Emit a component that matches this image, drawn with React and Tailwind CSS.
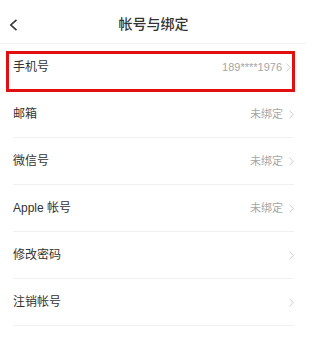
import React from "react";

const rows = [
  { label: "手机号", value: "189****1976", marked: true },
  { label: "邮箱", value: "未绑定" },
  { label: "微信号", value: "未绑定" },
  { label: "Apple 帐号", value: "未绑定" },
  { label: "修改密码", value: "" },
  { label: "注销帐号", value: "" },
];

function Chevron({ className }) {
  return (
    <svg width="5" height="9" viewBox="0 0 5 9" className={className}>
      <path d="M0.6 0.6 L4.2 4.5 L0.6 8.4" fill="none" stroke="#c8c8c8" strokeWidth="0.9" />
    </svg>
  );
}

function Row({ label, value, marked }) {
  return (
    <div className="relative h-[47px]">
      <div className="mx-[13px] flex h-full items-center justify-between border-b border-[#f1f1f1]">
        <span className="text-[12px] text-[#333333]">{label}</span>
        <div className={marked ? "mr-[3px] flex items-center" : "flex items-center"}>
          <span className="text-[11px] text-[#a6a6a6]">{value}</span>
          <Chevron className={marked ? "ml-[4px]" : "ml-[6px]"} />
        </div>
      </div>
      {marked && (
        <div className="absolute left-[6px] right-[12px] top-[7px] bottom-[-1px] border-[3px] border-[#e10f0f]" />
      )}
    </div>
  );
}

export default function App() {
  return (
    <div
      className="h-[353px] w-[307px] overflow-hidden bg-white"
      style={{ fontFamily: '"Liberation Sans", "Noto Sans CJK SC", sans-serif' }}
    >
      <div className="relative flex h-[44px] items-center justify-center border-b border-[#f3f3f3] pt-[5px]">
        <svg width="9" height="12" viewBox="0 0 9 12" className="absolute left-[9px] top-[19px]">
          <path d="M7.5 0.8 L1.8 6 L7.5 11.2" fill="none" stroke="#333333" strokeWidth="1.6" />
        </svg>
        <span className="text-[14px] font-medium text-[#333333]">帐号与绑定</span>
      </div>
      {rows.map((r) => (
        <Row key={r.label} {...r} />
      ))}
    </div>
  );
}
